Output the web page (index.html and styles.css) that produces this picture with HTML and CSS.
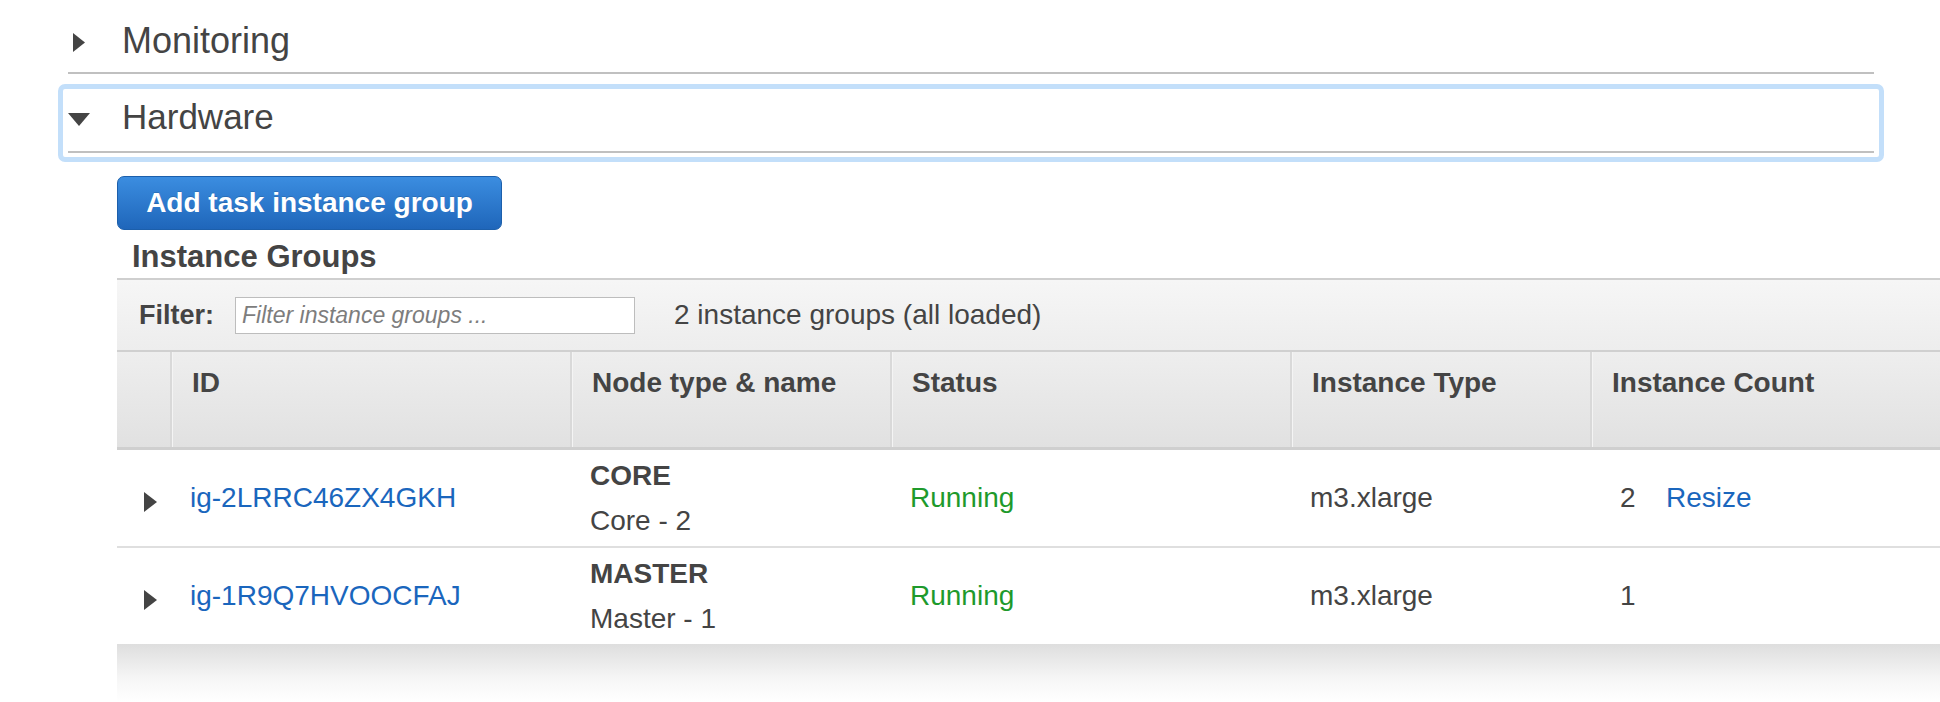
FILE: index.html
```html
<!DOCTYPE html>
<html>
<head>
<meta charset="utf-8">
<title>Hardware</title>
<link rel="stylesheet" href="styles.css">
</head>
<body>
  <section class="panel panel-first">
    <div class="panel-head">
      <span class="caret">
        <svg width="12" height="19" viewBox="0 0 12 19"><path d="M0 0 L12 9.5 L0 19 Z" fill="#444"/></svg>
      </span>
      <span class="panel-title">Monitoring</span>
    </div>
  </section>
  <section class="panel panel-focused">
    <div class="panel-head panel-head-open">
      <span class="caret">
        <svg width="22" height="13" viewBox="0 0 22 13"><path d="M0 0 L22 0 L11 13 Z" fill="#444"/></svg>
      </span>
      <span class="panel-title">Hardware</span>
    </div>
  </section>

  <div class="content">
    <button class="btn-primary" type="button">Add task instance group</button>
    <h3 class="group-title">Instance Groups</h3>

    <div class="grid-wrap">
      <div class="filter-bar">
        <label class="filter-label">Filter:</label>
        <input class="filter-input" type="text" placeholder="Filter instance groups ...">
        <span class="filter-count">2 instance groups (all loaded)</span>
      </div>

      <div class="grid">
        <div class="grid-row grid-head">
          <div class="cell cell-arrow"></div>
          <div class="cell">ID</div>
          <div class="cell">Node type &amp; name</div>
          <div class="cell">Status</div>
          <div class="cell">Instance Type</div>
          <div class="cell">Instance Count</div>
        </div>
        <div class="grid-row grid-body-row">
          <div class="cell cell-arrow"><svg width="13" height="20" viewBox="0 0 13 20"><path d="M0 0 L13 10 L0 20 Z" fill="#444"/></svg></div>
          <div class="cell"><a class="link" href="#">ig-2LRRC46ZX4GKH</a></div>
          <div class="cell cell-node"><div class="node-type">CORE</div><div class="node-name">Core - 2</div></div>
          <div class="cell running">Running</div>
          <div class="cell">m3.xlarge</div>
          <div class="cell cell-count"><span class="count-num">2</span><a class="link" href="#">Resize</a></div>
        </div>
        <div class="grid-row grid-body-row">
          <div class="cell cell-arrow"><svg width="13" height="20" viewBox="0 0 13 20"><path d="M0 0 L13 10 L0 20 Z" fill="#444"/></svg></div>
          <div class="cell"><a class="link" href="#">ig-1R9Q7HVOOCFAJ</a></div>
          <div class="cell cell-node"><div class="node-type">MASTER</div><div class="node-name">Master - 1</div></div>
          <div class="cell running">Running</div>
          <div class="cell">m3.xlarge</div>
          <div class="cell cell-count"><span class="count-num">1</span></div>
        </div>
      </div>
      <div class="grid-shadow"></div>
    </div>
  </div>
</body>
</html>
```
FILE: styles.css
```css
html, body {
  margin: 0;
  padding: 0;
  background: #fff;
}
body {
  width: 1940px;
  height: 702px;
  overflow: hidden;
  font-family: "Liberation Sans", Arial, sans-serif;
  color: #444;
}

.panel {
  margin-left: 58px;
  width: 1816px;
  border: 5px solid transparent;
  border-radius: 7px;
}
.panel-first {
  margin-top: 5px;
}
.panel-focused {
  margin-top: 1px;
  border-color: #c3dffa;
}
.panel-head {
  display: flex;
  align-items: center;
  height: 62px;
  margin: 0 5px 4px;
  border-bottom: 2px solid #c0c0c0;
  box-sizing: content-box;
}
.panel-head-open {
  align-items: flex-start;
}
.caret {
  width: 22px;
  display: flex;
  justify-content: center;
  align-items: center;
}
.panel-first .caret {
  margin-top: 3px;
}
.panel-head-open .caret {
  margin-top: 24px;
}
.caret svg {
  display: block;
}
.panel-title {
  margin-left: 32px;
  font-size: 36px;
  line-height: 40px;
  color: #444;
}
.panel-head-open .panel-title {
  font-size: 35px;
  margin-top: 8px;
}

.content {
  padding-left: 117px;
}
.btn-primary {
  display: block;
  margin-top: 14px;
  width: 385px;
  height: 54px;
  padding: 0;
  border: 1px solid #1c5fab;
  border-radius: 7px;
  background: linear-gradient(#3b8de0, #1f66ba);
  color: #fff;
  font-family: "Liberation Sans", Arial, sans-serif;
  font-weight: bold;
  font-size: 28px;
  text-shadow: 0 -1px 0 rgba(0, 0, 0, 0.15);
}
.group-title {
  margin: 9px 0 3px 15px;
  font-size: 31px;
  line-height: 36px;
  font-weight: bold;
  color: #444;
}

.grid-wrap {
  width: 1823px;
}
.filter-bar {
  display: flex;
  align-items: center;
  height: 70px;
  padding-left: 22px;
  border-top: 2px solid #cfcfcf;
  background: linear-gradient(#f6f6f6, #ededed);
}
.filter-label {
  font-weight: bold;
  font-size: 27px;
  color: #444;
}
.filter-input {
  margin-left: 21px;
  width: 400px;
  height: 37px;
  box-sizing: border-box;
  border: 1px solid #bdbdbd;
  padding: 0 6px;
  background: #fff;
  font-family: "Liberation Sans", Arial, sans-serif;
  font-size: 23px;
  font-style: italic;
  color: #444;
  outline: none;
}
.filter-input::placeholder {
  color: #7d7d7d;
  font-style: italic;
}
.filter-count {
  margin-left: 39px;
  font-size: 28px;
  color: #444;
}

.grid-row {
  display: grid;
  grid-template-columns: 53px 400px 320px 400px 300px 350px;
}
.grid-head {
  height: 95px;
  border-top: 2px solid #d0d0d0;
  border-bottom: 3px solid #cfcfcf;
  background: linear-gradient(#eeeeee, #e1e1e1);
}
.grid-head .cell {
  padding: 14px 0 0 20px;
  font-size: 28px;
  line-height: 34px;
  font-weight: bold;
  color: #444;
  border-left: 2px solid #d9d9d9;
  box-shadow: inset 1px 0 0 #f4f4f4;
}
.grid-head .cell-arrow {
  border-left: none;
  box-shadow: none;
  padding: 0;
}
.grid-body-row {
  height: 96px;
  background: #fff;
}
.grid-body-row + .grid-body-row {
  border-top: 2px solid #dfdfdf;
}
.grid-body-row .cell {
  display: flex;
  align-items: center;
  padding-left: 20px;
  font-size: 28px;
  line-height: 34px;
  color: #444;
}
.grid-body-row .cell-arrow {
  padding-left: 27px;
}
.cell-arrow svg {
  display: block;
  margin-top: 8px;
}
.grid-body-row .cell-node {
  flex-direction: column;
  align-items: flex-start;
  justify-content: center;
}
.node-type {
  font-weight: bold;
  line-height: 45px;
}
.node-name {
  line-height: 45px;
}
.grid-body-row .running {
  color: #1e9a2c;
}
.link {
  color: #1a66bd;
  text-decoration: none;
}
.grid-body-row .cell-count {
  padding-left: 30px;
}
.count-num {
  display: inline-block;
  width: 46px;
}

.grid-shadow {
  height: 58px;
  background: linear-gradient(#dedede, #f6f6f6 60%, #ffffff);
}
```
